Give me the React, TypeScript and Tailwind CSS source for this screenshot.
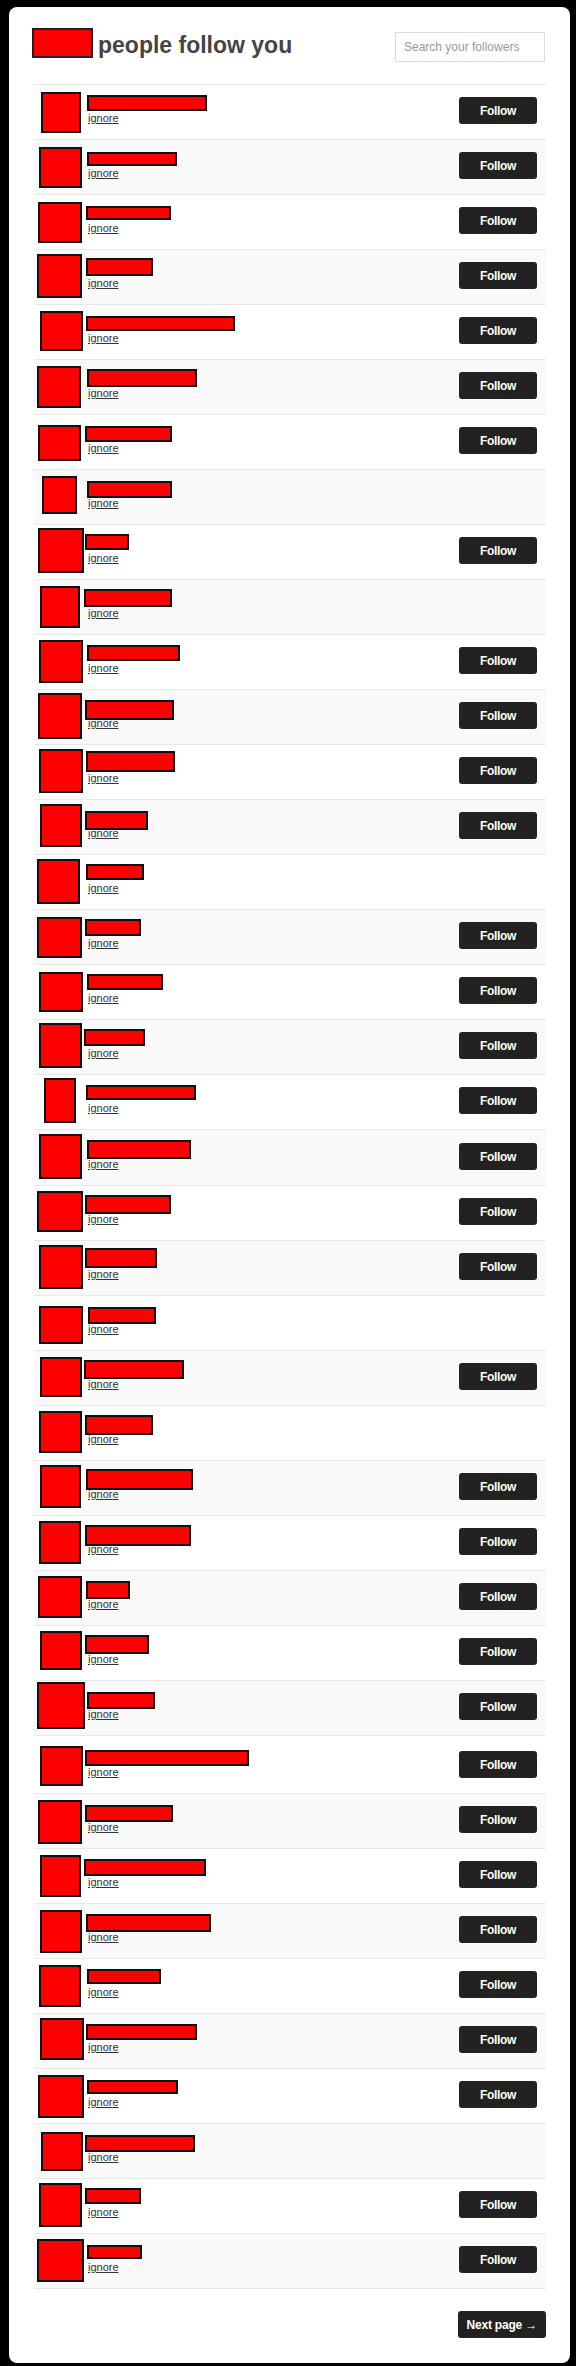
type Row = {
  a: [number, number, number, number];
  n: [number, number, number, number];
  f: boolean;
  h?: number;
  s?: number;
};

// redacted avatar / name boxes: [x, top-in-row, width, height]
const rows: Row[] = [
  { a: [41, 8, 40, 41], n: [87, 11, 120, 16], f: true },
  { a: [39, 8, 43, 41], n: [87, 13, 90, 14], f: true },
  { a: [38, 8, 44, 41], n: [86, 12, 85, 14], f: true },
  { a: [37, 5, 45, 44], n: [86, 9, 67, 18], f: true },
  { a: [40, 7, 43, 40], n: [86, 12, 149, 15], f: true },
  { a: [37, 7, 44, 42], n: [87, 10, 110, 18], f: true },
  { a: [38, 11, 43, 36], n: [85, 12, 87, 16], f: true },
  { a: [42, 7, 35, 38], n: [87, 12, 85, 17], f: false },
  { a: [38, 4, 46, 45], n: [85, 10, 44, 16], f: true },
  { a: [40, 7, 40, 42], n: [84, 10, 88, 18], f: false },
  { a: [39, 6, 44, 43], n: [87, 11, 93, 16], f: true },
  { a: [38, 4, 44, 46], n: [85, 11, 89, 20], f: true },
  { a: [39, 5, 44, 44], n: [86, 7, 89, 21], f: true },
  { a: [40, 5, 42, 43], n: [85, 12, 63, 19], f: true },
  { a: [37, 5, 43, 45], n: [86, 10, 58, 16], f: false },
  { a: [37, 8, 45, 41], n: [85, 10, 56, 17], f: true },
  { a: [39, 8, 44, 40], n: [87, 10, 76, 16], f: true },
  { a: [39, 4, 43, 45], n: [84, 10, 61, 17], f: true },
  { a: [44, 4, 32, 45], n: [86, 11, 110, 15], f: true },
  { a: [39, 5, 43, 45], n: [87, 11, 104, 19], f: true, h: 56, s: 1 },
  { a: [37, 6, 46, 41], n: [85, 10, 86, 19], f: true },
  { a: [39, 5, 44, 44], n: [85, 8, 72, 20], f: true },
  { a: [39, 11, 44, 38], n: [88, 12, 68, 17], f: false },
  { a: [40, 7, 42, 40], n: [84, 10, 100, 19], f: true },
  { a: [39, 6, 43, 42], n: [85, 10, 68, 20], f: false },
  { a: [40, 5, 41, 43], n: [86, 9, 107, 21], f: true },
  { a: [39, 6, 42, 43], n: [85, 10, 106, 21], f: true },
  { a: [38, 6, 44, 42], n: [86, 11, 44, 18], f: true },
  { a: [40, 6, 42, 39], n: [85, 10, 64, 19], f: true },
  { a: [37, 2, 48, 47], n: [87, 12, 68, 17], f: true },
  { a: [40, 11, 43, 40], n: [85, 15, 164, 16], f: true, h: 58, s: 3 },
  { a: [38, 7, 44, 44], n: [85, 12, 88, 17], f: true },
  { a: [40, 7, 41, 42], n: [84, 11, 122, 17], f: true },
  { a: [40, 7, 42, 43], n: [86, 11, 125, 18], f: true },
  { a: [39, 7, 42, 42], n: [87, 11, 74, 15], f: true },
  { a: [40, 5, 44, 42], n: [86, 11, 111, 16], f: true },
  { a: [38, 7, 46, 43], n: [87, 12, 91, 14], f: true },
  { a: [41, 9, 42, 39], n: [85, 12, 110, 17], f: false },
  { a: [39, 5, 43, 44], n: [85, 10, 56, 16], f: true },
  { a: [37, 6, 47, 43], n: [87, 12, 55, 14], f: true },
];

function FollowerRow({ row, index }: { row: Row; index: number }) {
  const [ax, ay, aw, ah] = row.a;
  const [nx, ny, nw, nh] = row.n;
  const shift = row.s ?? 0;

  return (
    <li
      className={`flex border-t border-[#e8e8e8] ${index % 2 ? "bg-[#f9f9f9]" : "bg-white"}`}
      style={{ height: row.h ?? 55 }}
    >
      {/* avatar */}
      <div className="w-[50px] shrink-0">
        <div
          className="border-2 border-[#111] bg-[#ff0000]"
          style={{ marginLeft: ax - 34, marginTop: ay - 1, width: aw, height: ah }}
        />
      </div>

      {/* name + ignore */}
      <div className="flex min-w-0 flex-1 flex-col">
        <div style={{ height: 27 + shift }}>
          <div
            className="border-2 border-[#111] bg-[#ff0000]"
            style={{ marginLeft: nx - 84, marginTop: ny - 1, width: nw, height: nh }}
          />
        </div>
        <a href="#" className="ml-[4px] self-start text-[11px] leading-[13px] text-[#333] underline">
          ignore
        </a>
      </div>

      {row.f && (
        <button
          className="mr-[9px] h-[27px] w-[78px] shrink-0 rounded-[3px] bg-[#222] text-[12px] font-bold tracking-[-0.3px] text-white"
          style={{ marginTop: 12 + shift }}
        >
          Follow
        </button>
      )}
    </li>
  );
}

export default function App() {
  return (
    <div className="min-h-screen bg-black pt-[7px] pr-[6px] pb-[3px] pl-[9px] font-['Liberation_Sans',Arial,sans-serif]">
      <div className="rounded-lg bg-white pt-[21px] pr-[24px] pb-[25px] pl-[23px]">
        {/* Header */}
        <div className="flex items-start justify-between">
          <div className="flex items-start">
            <div className="h-[30px] w-[61px] border-2 border-[#222] bg-[#ff0000]" />
            <h1 className="mt-[2px] ml-[5px] text-[23px] leading-[30px] font-bold text-[#444]">
              people follow you
            </h1>
          </div>
          <input
            type="text"
            placeholder="Search your followers"
            className="mt-[4px] mr-[1px] h-[30px] w-[150px] border border-[#dcdcdc] px-[8px] text-[12px] text-[#333] outline-none placeholder:text-[#999]"
          />
        </div>

        {/* Followers list */}
        <ul className="mt-[22px] ml-[2px] border-b border-[#e8e8e8]">
          {rows.map((row, i) => (
            <FollowerRow key={i} row={row} index={i} />
          ))}
        </ul>

        <div className="mt-[22px] flex justify-end">
          <button className="h-[27px] rounded-[3px] bg-[#222] px-[9px] text-[12px] font-bold tracking-[-0.2px] text-white">
            Next page →
          </button>
        </div>
      </div>
    </div>
  );
}
